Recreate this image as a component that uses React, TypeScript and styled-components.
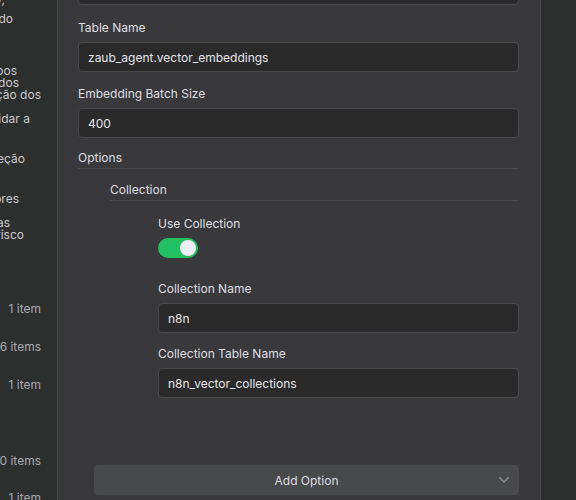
import React from "react";
import styled, { createGlobalStyle } from "styled-components";

const GlobalStyle = createGlobalStyle`
  html, body {
    margin: 0;
    padding: 0;
    background: #2d2e2e;
    font-family: Inter, "Noto Sans", sans-serif;
    -webkit-font-smoothing: antialiased;
  }
`;

const Screen = styled.div`
  display: flex;
  width: 576px;
  height: 500px;
  overflow: hidden;
  background: #2d2e2e;
`;

const Sidebar = styled.div`
  width: 57px;
  flex-shrink: 0;
  overflow: hidden;
  border-right: 1px solid #48484b;
  background: #2d2e2e;
`;

const SideLine = styled.div<{ $end: number; $top?: number }>`
  display: flex;
  justify-content: flex-end;
  overflow: hidden;
  white-space: nowrap;
  height: 12px;
  line-height: 12px;
  font-size: 12px;
  color: #c9c9cc;
  padding-right: ${(p) => p.$end}px;
  margin-top: ${(p) => p.$top ?? 0}px;
`;

const Count = styled(SideLine)`
  color: #a8a8ad;
`;

const Panel = styled.div`
  width: 482px;
  flex-shrink: 0;
  background: #39393b;
  border-right: 1px solid #48484b;
  overflow: hidden;
`;

const PanelBody = styled.div`
  margin-top: -25px;
  padding: 0 21px 0 20px;
  display: flex;
  flex-direction: column;
`;

const Field = styled.div<{ $gap?: number }>`
  display: flex;
  flex-direction: column;
  gap: 6px;
  margin-top: ${(p) => p.$gap ?? 0}px;
`;

const Label = styled.div`
  font-size: 12px;
  line-height: 17px;
  color: #dedee2;
`;

const Input = styled.div`
  box-sizing: border-box;
  height: 30px;
  border: 1px solid #4a4a4d;
  border-radius: 4px;
  background: #2a2a2b;
  padding: 0 9px;
  display: flex;
  align-items: center;
  font-size: 12px;
  color: #e6e6ea;
`;

const Section = styled.div<{ $indent: number; $gap: number }>`
  margin-left: ${(p) => p.$indent}px;
  margin-top: ${(p) => p.$gap}px;
  display: flex;
  flex-direction: column;
`;

const SectionTitle = styled.div`
  font-size: 12px;
  line-height: 17px;
  color: #dedee2;
  padding-bottom: 2px;
  border-bottom: 1px solid #4a4a4d;
`;

const Fields = styled.div`
  margin-left: 48px;
  display: flex;
  flex-direction: column;
`;

const Toggle = styled.div<{ $on: boolean }>`
  box-sizing: border-box;
  width: 40px;
  height: 20px;
  border-radius: 10px;
  background: ${(p) => (p.$on ? "#22c062" : "#5a5a5e")};
  display: flex;
  align-items: center;
  justify-content: ${(p) => (p.$on ? "flex-end" : "flex-start")};
  padding: 0 2px;
`;

const Knob = styled.div`
  width: 16px;
  height: 16px;
  border-radius: 50%;
  background: #eeeef7;
`;

const AddButton = styled.button`
  box-sizing: border-box;
  margin: 67px 0 0 16px;
  height: 30px;
  border: none;
  border-radius: 4px;
  background: #48494b;
  color: #dcdce0;
  font-family: inherit;
  font-size: 12px;
  position: relative;
  display: flex;
  align-items: center;
  justify-content: center;
`;

const Chevron = styled.svg`
  position: absolute;
  right: 9px;
  top: 10px;
`;

const RightSpace = styled.div`
  flex: 1;
  background: #2d2e2e;
`;

export default function App() {
  return (
    <>
      <GlobalStyle />
      <Screen>
        <Sidebar>
          <SideLine $end={52} $top={-6}>de uso da empresa y,</SideLine>
          <SideLine $end={44} $top={7}>Descrição do modo</SideLine>
          <SideLine $end={40} $top={40}>Todos os campos</SideLine>
          <SideLine $end={38}>obrigatórios dos</SideLine>
          <SideLine $end={16}>da configuração dos</SideLine>
          <SideLine $end={27} $top={12}>para consolidar a</SideLine>
          <SideLine $end={32} $top={28}>Seleção da seção</SideLine>
          <SideLine $end={38} $top={28}>Indicadores</SideLine>
          <SideLine $end={47} $top={12}>Métricas</SideLine>
          <SideLine $end={33}>Análise de risco</SideLine>
          <Count $end={16} $top={62}>1 item</Count>
          <Count $end={16} $top={26}>6 items</Count>
          <Count $end={16} $top={26}>1 item</Count>
          <Count $end={16} $top={64}>10 items</Count>
          <Count $end={16} $top={25}>1 item</Count>
        </Sidebar>
        <Panel>
          <PanelBody>
            <Input />
            <Field $gap={14}>
              <Label>Table Name</Label>
              <Input>zaub_agent.vector_embeddings</Input>
            </Field>
            <Field $gap={13}>
              <Label>Embedding Batch Size</Label>
              <Input>400</Input>
            </Field>
            <Section $indent={0} $gap={11}>
              <SectionTitle>Options</SectionTitle>
              <Section $indent={32} $gap={12}>
                <SectionTitle>Collection</SectionTitle>
                <Fields>
                  <Field $gap={14}>
                    <Label>Use Collection</Label>
                    <Toggle $on={true}>
                      <Knob />
                    </Toggle>
                  </Field>
                  <Field $gap={22}>
                    <Label>Collection Name</Label>
                    <Input>n8n</Input>
                  </Field>
                  <Field $gap={12}>
                    <Label>Collection Table Name</Label>
                    <Input>n8n_vector_collections</Input>
                  </Field>
                </Fields>
              </Section>
            </Section>
            <AddButton>
              Add Option
              <Chevron width="12" height="10" viewBox="0 0 12 10">
                <path
                  d="M1.5 2.5 L6 7 L10.5 2.5"
                  fill="none"
                  stroke="#8c8c92"
                  strokeWidth="1.4"
                  strokeLinecap="round"
                  strokeLinejoin="round"
                />
              </Chevron>
            </AddButton>
          </PanelBody>
        </Panel>
        <RightSpace />
      </Screen>
    </>
  );
}
